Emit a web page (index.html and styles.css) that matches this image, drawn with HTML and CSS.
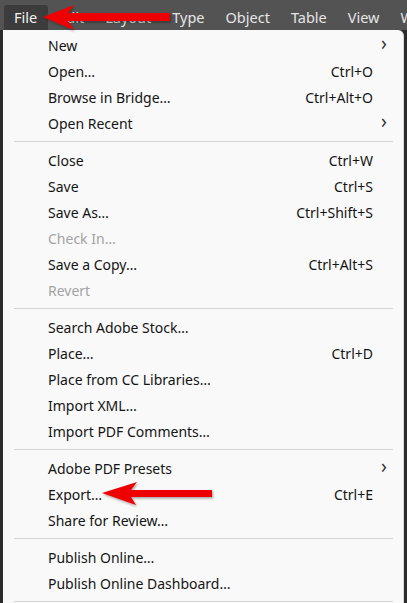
FILE: index.html
```html
<!DOCTYPE html>
<html>
<head>
<meta charset="utf-8">
<link rel="stylesheet" href="styles.css">
</head>
<body>
<div class="app">
  <div class="menubar">
    <span class="top-item active">File</span>
    <span class="top-item">Edit</span>
    <span class="top-item">Layout</span>
    <span class="top-item">Type</span>
    <span class="top-item">Object</span>
    <span class="top-item">Table</span>
    <span class="top-item">View</span>
    <span class="top-item">Window</span>
  </div>
  <div class="stage">
    <div class="menu">
      <div class="row"><span class="label">New</span><span class="key"></span><span class="sub">&#x203A;</span></div>
      <div class="row"><span class="label">Open…</span><span class="key">Ctrl+O</span><span class="sub"></span></div>
      <div class="row"><span class="label">Browse in Bridge…</span><span class="key">Ctrl+Alt+O</span><span class="sub"></span></div>
      <div class="row"><span class="label">Open Recent</span><span class="key"></span><span class="sub">&#x203A;</span></div>
      <div class="sep"></div>
      <div class="row"><span class="label">Close</span><span class="key">Ctrl+W</span><span class="sub"></span></div>
      <div class="row"><span class="label">Save</span><span class="key">Ctrl+S</span><span class="sub"></span></div>
      <div class="row"><span class="label">Save As…</span><span class="key">Ctrl+Shift+S</span><span class="sub"></span></div>
      <div class="row disabled"><span class="label">Check In…</span><span class="key"></span><span class="sub"></span></div>
      <div class="row"><span class="label">Save a Copy…</span><span class="key">Ctrl+Alt+S</span><span class="sub"></span></div>
      <div class="row disabled"><span class="label">Revert</span><span class="key"></span><span class="sub"></span></div>
      <div class="sep"></div>
      <div class="row"><span class="label">Search Adobe Stock…</span><span class="key"></span><span class="sub"></span></div>
      <div class="row"><span class="label">Place…</span><span class="key">Ctrl+D</span><span class="sub"></span></div>
      <div class="row"><span class="label">Place from CC Libraries…</span><span class="key"></span><span class="sub"></span></div>
      <div class="row"><span class="label">Import XML…</span><span class="key"></span><span class="sub"></span></div>
      <div class="row"><span class="label">Import PDF Comments…</span><span class="key"></span><span class="sub"></span></div>
      <div class="sep"></div>
      <div class="row"><span class="label">Adobe PDF Presets</span><span class="key"></span><span class="sub">&#x203A;</span></div>
      <div class="row"><span class="label">Export…</span><span class="key">Ctrl+E</span><span class="sub"></span></div>
      <div class="row"><span class="label">Share for Review…</span><span class="key"></span><span class="sub"></span></div>
      <div class="sep"></div>
      <div class="row"><span class="label">Publish Online…</span><span class="key"></span><span class="sub"></span></div>
      <div class="row"><span class="label">Publish Online Dashboard…</span><span class="key"></span><span class="sub"></span></div>
      <div class="sep"></div>
    </div>
  </div>
  <svg class="arrows" width="407" height="603" viewBox="0 0 407 603" xmlns="http://www.w3.org/2000/svg">
    <defs>
      <filter id="sh" x="-10%" y="-30%" width="130%" height="180%">
        <feDropShadow dx="1" dy="1.5" stdDeviation="1" flood-color="#000" flood-opacity="0.35"/>
      </filter>
    </defs>
    <g filter="url(#sh)" fill="#ee0000">
      <polygon points="43,17 74,5 68,13 170,13 170,21 68,21 74,30"/>
      <polygon points="102,493 137,482 131,490 212,490 212,497 131,497 136,505"/>
    </g>
  </svg>
</div>
</body>
</html>
```
FILE: styles.css
```css
* { box-sizing: border-box; }
html, body { margin: 0; padding: 0; }
body {
  width: 407px;
  height: 603px;
  overflow: hidden;
  background: #535353;
  font-family: "Noto Sans", "Open Sans", sans-serif;
}
.app {
  position: relative;
  width: 407px;
  height: 603px;
  overflow: hidden;
}
.menubar {
  height: 30px;
  background: #535353;
  display: flex;
  align-items: flex-end;
  padding-left: 4px;
  white-space: nowrap;
  overflow: hidden;
}
.top-item {
  color: #e6e6e6;
  font-size: 14.5px;
  height: 25px;
  line-height: 24px;
  padding: 0 11px 0 10px;
  flex: none;
}
.top-item.active {
  background: #3c3c3c;
  border-radius: 3px 3px 0 0;
  color: #f2f2f2;
}
.stage {
  display: flex;
  background: #2b2b2b;
  padding: 0 3px;
  height: 573px;
}
.menu {
  flex: 1;
  background: #f9f9f9;
  border-radius: 0 6px 0 0;
  padding-top: 2px;
  border-right: 1px solid #d8d8d8;
}
.row {
  height: 26px;
  display: grid;
  grid-template-columns: 1fr auto 30px;
  align-items: center;
  padding-left: 45px;
  font-size: 14px;
  color: #141414;
}
.row.disabled { color: #a3a3a3; }
.key { text-align: right; }
.sub {
  text-align: left;
  font-size: 19px;
  line-height: 20px;
  color: #333;
  padding-bottom: 4px;
  padding-left: 8px;
}
.sep {
  height: 1px;
  margin: 5px 10px 5px 11px;
  background: #d5d5d5;
}
.arrows {
  position: absolute;
  left: 0;
  top: 0;
  pointer-events: none;
}
```
